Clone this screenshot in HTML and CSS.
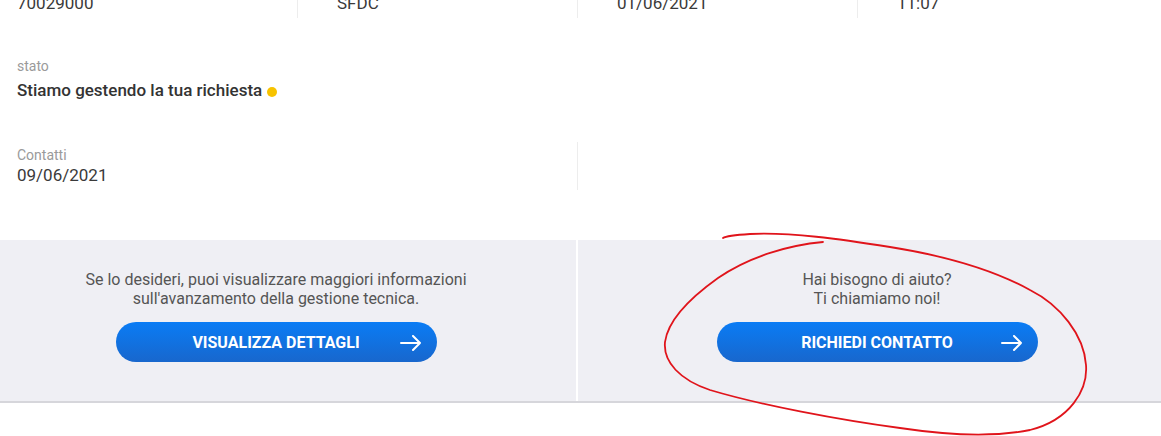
FILE: index.html
```html
<!DOCTYPE html>
<html lang="it">
<head>
  <meta charset="UTF-8">
  <title>Dettaglio richiesta</title>
  <link rel="stylesheet" href="styles.css">
</head>
<body>

  <!-- Dati richiesta -->
  <div class="info-row four">
    <div class="cell first">
      <div class="label">Numero richiesta</div>
      <div class="value">70029000</div>
    </div>
    <div class="cell">
      <div class="label">Canale</div>
      <div class="value">SFDC</div>
    </div>
    <div class="cell">
      <div class="label">Data apertura</div>
      <div class="value">01/06/2021</div>
    </div>
    <div class="cell">
      <div class="label">Ora</div>
      <div class="value">11:07</div>
    </div>
  </div>

  <div class="status">
    <div class="label">stato</div>
    <div class="value strong">Stiamo gestendo la tua richiesta <span class="dot"></span></div>
  </div>

  <div class="info-row two">
    <div class="cell first">
      <div class="label">Contatti</div>
      <div class="value">09/06/2021</div>
    </div>
    <div class="cell"></div>
  </div>

  <!-- Azioni -->
  <div class="actions">
    <div class="panel left">
      <p>Se lo desideri, puoi visualizzare maggiori informazioni<br>sull'avanzamento della gestione tecnica.</p>
      <button class="cta">
        VISUALIZZA DETTAGLI
        <svg class="arrow" viewBox="0 0 22 16" width="22" height="16"><path d="M1 8h19M13 1l7 7-7 7" fill="none" stroke="#fff" stroke-width="2" stroke-linecap="round" stroke-linejoin="round"/></svg>
      </button>
    </div>
    <div class="panel right">
      <p>Hai bisogno di aiuto?<br>Ti chiamiamo noi!</p>
      <button class="cta">
        RICHIEDI CONTATTO
        <svg class="arrow" viewBox="0 0 22 16" width="22" height="16"><path d="M1 8h19M13 1l7 7-7 7" fill="none" stroke="#fff" stroke-width="2" stroke-linecap="round" stroke-linejoin="round"/></svg>
      </button>
    </div>
  </div>

  <!-- segno a mano -->
  <svg class="scribble" viewBox="0 0 1161 436" width="1161" height="436">
    <path d="M823,242 C790,245 750,256 718,278 C690,298 668,320 665,342 C663,362 680,380 710,390 C760,405 840,420 900,428 C940,434 990,438 1030,430 C1070,420 1088,390 1086,365 C1084,335 1060,305 1030,290 C990,268 940,255 890,247 C840,239 790,232 750,234 C735,235 726,236 723,238" fill="none" stroke="#e0141b" stroke-width="1.8" stroke-linecap="round"/>
  </svg>

</body>
</html>
```

FILE: styles.css
```css
* {
  box-sizing: border-box;
}

body {
  margin: 0;
  font-family: Roboto, 'Liberation Sans', sans-serif;
  background-color: white;
  color: #333;
  overflow: hidden;
}

/* Righe dati */
.info-row {
  display: grid;
}

.info-row.four {
  grid-template-columns: 297px 280px 280px 1fr;
  margin-top: -30px;
}

.info-row.two {
  grid-template-columns: 577px 1fr;
  margin-top: 42px;
}

.cell {
  padding: 5px 0 4px 39px;
  border-left: 1px solid #ededed;
  height: 48px;
}

.cell.first {
  padding-left: 17px;
  border-left: none;
}

.label {
  font-size: 14px;
  line-height: 16px;
  color: #9a9a9a;
}

.value {
  font-size: 17px;
  line-height: 20px;
  margin-top: 2px;
  color: #3a3a3a;
}

.value.strong {
  font-weight: 500;
  color: #333;
}

/* Stato */
.status {
  margin-top: 40px;
  padding-left: 17px;
}

.status .value {
  margin-top: 6px;
}

.dot {
  display: inline-block;
  width: 10px;
  height: 10px;
  margin-left: 1px;
  border-radius: 50%;
  background-color: #f7c300;
  vertical-align: -1px;
}

/* Pannelli azioni */
.actions {
  display: grid;
  grid-template-columns: 576px 1fr;
  column-gap: 2px;
  margin-top: 50px;
  background: white;
  border-bottom: 2px solid #d6d6db;
}

.panel {
  background-color: #efeff4;
  height: 161px;
  padding-top: 30px;
  text-align: center;
}

.panel.left {
  padding-right: 24px;
}

.panel.right {
  padding-left: 15px;
}

.panel p {
  margin: 0;
  font-size: 16px;
  line-height: 19px;
  color: #555;
}

.cta {
  position: relative;
  width: 321px;
  height: 40px;
  margin-top: 14px;
  border: none;
  border-radius: 20px;
  background: linear-gradient(#0a7cf5, #1867cd);
  color: white;
  font-family: Roboto, 'Liberation Sans', sans-serif;
  font-size: 16px;
  font-weight: 700;
  cursor: pointer;
}

.arrow {
  position: absolute;
  right: 15px;
  top: 13px;
}

.scribble {
  position: absolute;
  top: 0;
  left: 0;
  pointer-events: none;
}
```
